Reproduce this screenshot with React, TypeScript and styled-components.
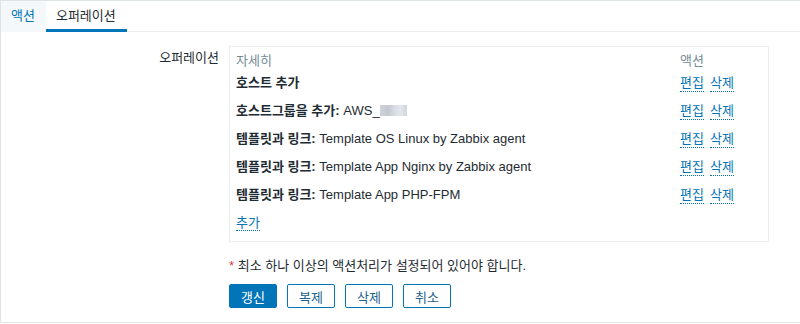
import React from 'react';
import styled, { createGlobalStyle } from 'styled-components';

const GlobalStyle = createGlobalStyle`
    html, body {
        margin: 0;
        padding: 0;
        background: #ffffff;
    }
    body {
        font-family: "Liberation Sans", Arial, "Noto Sans CJK KR", sans-serif;
        font-size: 13px;
        color: #1f2c33;
    }
`;

const Page = styled.div`
    width: 820px;
    border: 1px solid #dfe4e7;
    border-right: none;
    background: #ffffff;
`;

const TabBar = styled.ul`
    display: flex;
    margin: 0;
    padding: 0;
    list-style: none;
    height: 31px;
    border-bottom: 1px solid #ebeef0;
    box-sizing: border-box;
`;

const Tab = styled.li<{ $active?: boolean }>`
    height: 31px;
    box-sizing: border-box;
    padding: 0 11px 0 10px;
    line-height: 29px;
    margin-bottom: -1px;
    border-bottom: 3px solid ${(p) => (p.$active ? '#0275b8' : 'transparent')};
    background: ${(p) => (p.$active ? '#ffffff' : '#f4f8fb')};
    color: ${(p) => (p.$active ? '#1f2c33' : '#0275b8')};
    cursor: pointer;
`;

const FormBody = styled.div`
    padding: 14px 0 14px;
`;

const FormRow = styled.div`
    display: grid;
    grid-template-columns: 218px 540px;
    column-gap: 10px;
`;

const Label = styled.div`
    text-align: right;
    line-height: 18px;
    padding-top: 3px;
`;

const OpsBox = styled.div`
    border: 1px solid #ebeef0;
    padding: 5px 6px 4px;
`;

const OpsGrid = styled.div`
    display: grid;
    grid-template-columns: 1fr 82px;
    line-height: 18px;
`;

const HeadCell = styled.div`
    color: #768d99;
    height: 17px;
    line-height: 17px;
`;

const Cell = styled.div`
    height: 18px;
    padding: 5px 0;
    white-space: nowrap;
`;

const ActionCell = styled(Cell)`
    display: flex;
    gap: 6px;
`;

const Strong = styled.b`
    font-weight: bold;
`;

const LinkText = styled.a`
    color: #0275b8;
    text-decoration: none;
    border-bottom: 1px dotted #0275b8;
    cursor: pointer;
`;

const Redacted = styled.span`
    display: inline-block;
    vertical-align: -1px;
    width: 27px;
    height: 11px;
    background: linear-gradient(90deg, #cfd2d9 0%, #c4c8d0 30%, #dadde3 55%, #e3e6eb 75%, #d0d4db 100%);
    filter: blur(0.6px);
`;

const Note = styled.div`
    margin-top: 15px;
    height: 18px;
    line-height: 18px;
`;

const Asterisk = styled.span`
    color: #e33734;
`;

const Buttons = styled.div`
    display: flex;
    gap: 10px;
    margin-top: 9px;
`;

const Button = styled.button<{ $primary?: boolean }>`
    height: 24px;
    width: 48px;
    padding: 0;
    border-radius: 2px;
    font-family: inherit;
    font-size: 13px;
    border: 1px solid #0275b8;
    background: ${(p) => (p.$primary ? '#0275b8' : '#ffffff')};
    color: ${(p) => (p.$primary ? '#ffffff' : '#1d5f8c')};
    cursor: pointer;
`;

type Operation = { title: string; detail?: string; redacted?: boolean };

const operations: Operation[] = [
    { title: '호스트 추가' },
    { title: '호스트그룹을 추가:', detail: 'AWS_', redacted: true },
    { title: '템플릿과 링크:', detail: 'Template OS Linux by Zabbix agent' },
    { title: '템플릿과 링크:', detail: 'Template App Nginx by Zabbix agent' },
    { title: '템플릿과 링크:', detail: 'Template App PHP-FPM' },
];

const App = () => {
    return (
        <>
            <GlobalStyle />
            <Page>
                <TabBar>
                    <Tab>액션</Tab>
                    <Tab $active>오퍼레이션</Tab>
                </TabBar>
                <FormBody>
                    <FormRow>
                        <Label>오퍼레이션</Label>
                        <div>
                            <OpsBox>
                                <OpsGrid>
                                    <HeadCell>자세히</HeadCell>
                                    <HeadCell>액션</HeadCell>
                                    {operations.map((op, i) => (
                                        <React.Fragment key={i}>
                                            <Cell>
                                                <Strong>{op.title}</Strong>
                                                {op.detail && <> {op.detail}</>}
                                                {op.redacted && <Redacted />}
                                            </Cell>
                                            <ActionCell>
                                                <LinkText>편집</LinkText>
                                                <LinkText>삭제</LinkText>
                                            </ActionCell>
                                        </React.Fragment>
                                    ))}
                                    <Cell>
                                        <LinkText>추가</LinkText>
                                    </Cell>
                                    <Cell />
                                </OpsGrid>
                            </OpsBox>
                            <Note>
                                <Asterisk>*</Asterisk> 최소 하나 이상의 액션처리가 설정되어 있어야 합니다.
                            </Note>
                            <Buttons>
                                <Button $primary>갱신</Button>
                                <Button>복제</Button>
                                <Button>삭제</Button>
                                <Button>취소</Button>
                            </Buttons>
                        </div>
                    </FormRow>
                </FormBody>
            </Page>
        </>
    );
};

export default App;
